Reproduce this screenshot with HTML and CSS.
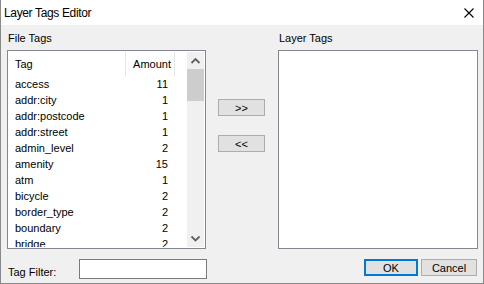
FILE: index.html
```html
<!DOCTYPE html>
<html lang="en">
<head>
    <meta charset="UTF-8">
    <title>Layer Tags Editor</title>
    <link rel="stylesheet" href="styles.css">
</head>
<body>
    <div class="dialog">
        <div class="titlebar">
            <span class="title">Layer Tags Editor</span>
            <svg class="close-icon" width="10" height="10" viewBox="0 0 10 10">
                <path d="M0.5 0.5 L9.5 9.5 M9.5 0.5 L0.5 9.5" stroke="#000" stroke-width="1.1" fill="none"/>
            </svg>
        </div>

        <div class="content">
            <div class="panes">
                <div class="pane pane-file">
                    <div class="pane-label">File Tags</div>
                    <div class="listbox">
                        <div class="list-view">
                            <div class="list-head">
                                <span class="col-tag">Tag</span>
                                <span class="col-amount">Amount</span>
                            </div>
                            <div class="list-row"><span class="col-tag">access</span><span class="col-amount">11</span></div>
                            <div class="list-row"><span class="col-tag">addr:city</span><span class="col-amount">1</span></div>
                            <div class="list-row"><span class="col-tag">addr:postcode</span><span class="col-amount">1</span></div>
                            <div class="list-row"><span class="col-tag">addr:street</span><span class="col-amount">1</span></div>
                            <div class="list-row"><span class="col-tag">admin_level</span><span class="col-amount">2</span></div>
                            <div class="list-row"><span class="col-tag">amenity</span><span class="col-amount">15</span></div>
                            <div class="list-row"><span class="col-tag">atm</span><span class="col-amount">1</span></div>
                            <div class="list-row"><span class="col-tag">bicycle</span><span class="col-amount">2</span></div>
                            <div class="list-row"><span class="col-tag">border_type</span><span class="col-amount">2</span></div>
                            <div class="list-row"><span class="col-tag">boundary</span><span class="col-amount">2</span></div>
                            <div class="list-row"><span class="col-tag">bridge</span><span class="col-amount">2</span></div>
                        </div>
                        <div class="scrollbar">
                            <div class="scroll-btn">
                                <svg width="17" height="17" viewBox="0 0 17 17">
                                    <polyline points="4.5,11 8.5,7 12.5,11" stroke="#606060" stroke-width="1.8" fill="none"/>
                                </svg>
                            </div>
                            <div class="scroll-thumb"></div>
                            <div class="scroll-track"></div>
                            <div class="scroll-btn">
                                <svg width="17" height="17" viewBox="0 0 17 17">
                                    <polyline points="4.5,6.5 8.5,10.5 12.5,6.5" stroke="#606060" stroke-width="1.8" fill="none"/>
                                </svg>
                            </div>
                        </div>
                    </div>
                </div>

                <div class="move-buttons">
                    <button class="btn btn-move">&gt;&gt;</button>
                    <button class="btn btn-move">&lt;&lt;</button>
                </div>

                <div class="pane pane-layer">
                    <div class="pane-label">Layer Tags</div>
                    <div class="listbox"></div>
                </div>
            </div>

            <div class="footer">
                <span class="filter-label">Tag Filter:</span>
                <input class="filter-input" type="text">
                <div class="spacer"></div>
                <button class="btn btn-ok">OK</button>
                <button class="btn btn-cancel">Cancel</button>
            </div>
        </div>
    </div>
</body>
</html>
```

FILE: styles.css
```css
body {
    margin: 0;
    font-family: "Liberation Sans", Arial, sans-serif;
    font-size: 11px;
    color: #000;
    background: #fff;
}
.dialog {
    width: 484px;
    height: 284px;
    box-sizing: border-box;
    border: 1px solid #8a8a8a;
    border-top: none;
    background: #f0f0f0;
    display: flex;
    flex-direction: column;
}
.titlebar {
    height: 25px;
    background: #fff;
    display: flex;
    align-items: center;
    justify-content: space-between;
    padding: 0 9px 0 3px;
}
.title {
    font-size: 12px;
    letter-spacing: -0.35px;
    padding-top: 1px;
}
.close-icon {
    display: block;
    margin-top: 1px;
}
.content {
    padding: 6px 5px 0 6px;
}
.panes {
    display: flex;
}
.pane-file {
    width: 199px;
}
.pane-layer {
    width: 200px;
}
.pane-label {
    height: 14px;
    line-height: 14px;
    margin-bottom: 5px;
    padding-left: 1px;
}
.listbox {
    height: 199px;
    box-sizing: border-box;
    border: 1px solid #828790;
    padding: 1px;
    background: #fff;
    display: flex;
    overflow: hidden;
}
.list-view {
    flex: 1;
    overflow: hidden;
}
.list-head {
    display: flex;
    height: 24px;
    line-height: 25px;
}
.list-head .col-tag {
    border-right: 1px solid #e5e5e5;
}
.list-head .col-amount {
    border-right: 1px solid #e5e5e5;
    padding-right: 3px;
}
.list-row {
    display: flex;
    height: 16px;
    line-height: 16px;
}
.col-tag {
    width: 117px;
    box-sizing: border-box;
    padding-left: 6px;
    white-space: nowrap;
}
.col-amount {
    width: 49px;
    box-sizing: border-box;
    padding-right: 7px;
    text-align: right;
}
.scrollbar {
    width: 17px;
    background: #f0f0f0;
    display: flex;
    flex-direction: column;
}
.scroll-btn {
    height: 17px;
}
.scroll-btn svg {
    display: block;
}
.scroll-thumb {
    height: 32px;
    background: #cdcdcd;
}
.scroll-track {
    flex: 1;
}
.move-buttons {
    width: 47px;
    margin: 0 13px 0 12px;
    padding-top: 68px;
    display: flex;
    flex-direction: column;
}
.btn {
    font-family: "Liberation Sans", Arial, sans-serif;
    font-size: 11px;
    color: #000;
    background: #e1e1e1;
    border: 1px solid #adadad;
    box-sizing: border-box;
    height: 17px;
    padding: 0;
    margin: 0;
    line-height: 14px;
}
.btn-move {
    width: 47px;
}
.btn-move + .btn-move {
    margin-top: 19px;
}
.footer {
    display: flex;
    align-items: flex-start;
    margin-top: 10px;
    height: 20px;
}
.filter-label {
    width: 72px;
    padding-top: 6px;
    line-height: 14px;
    padding-left: 1px;
    box-sizing: border-box;
}
.filter-input {
    width: 128px;
    height: 20px;
    box-sizing: border-box;
    border: 1px solid #7a7a7a;
    background: #fff;
    margin: 0;
    padding: 0;
}
.spacer {
    flex: 1;
}
.btn-ok {
    width: 54px;
    border: 2px solid #0078d7;
    margin-right: 3px;
}
.btn-cancel {
    width: 56px;
    margin-right: 1px;
}
```
